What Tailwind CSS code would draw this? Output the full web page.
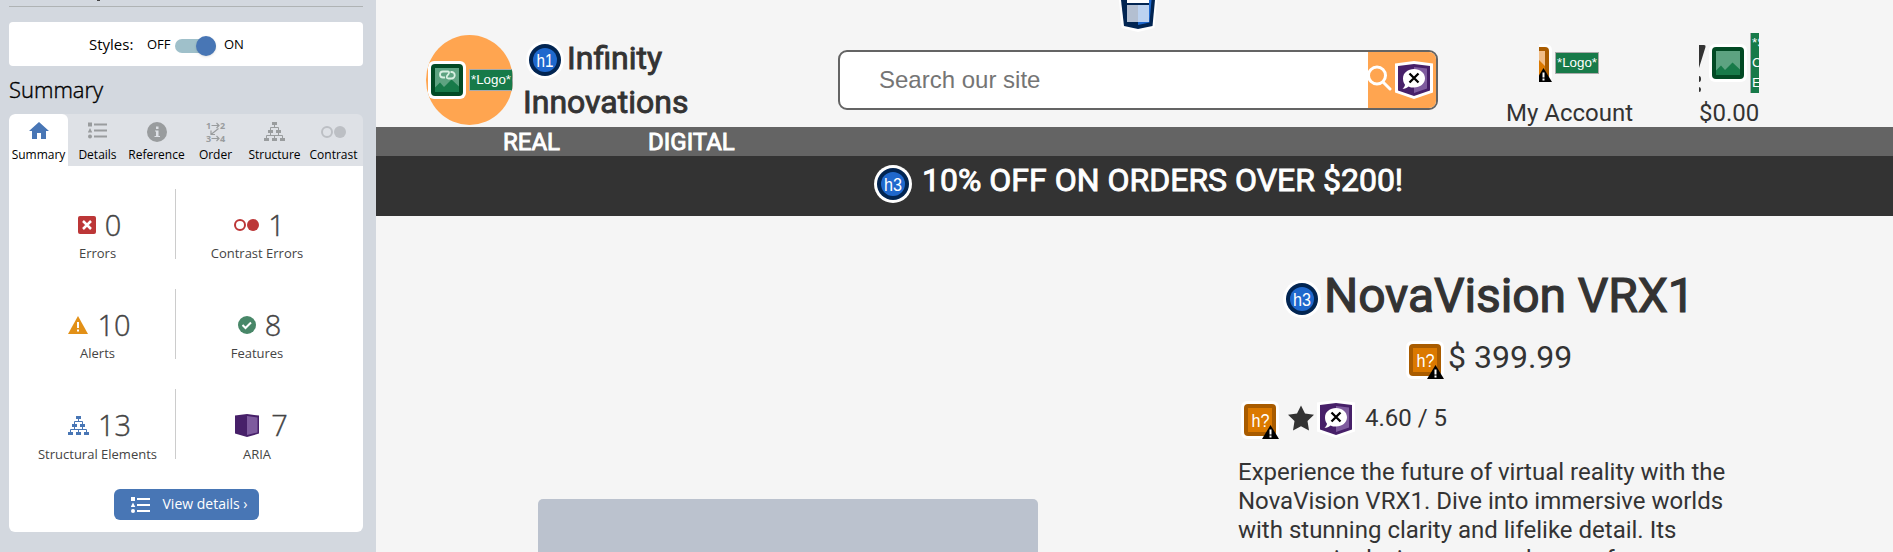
<!DOCTYPE html>
<html lang="en"><head><meta charset="utf-8"><title>Infinity Innovations</title>
<script src="https://cdn.jsdelivr.net/npm/@tailwindcss/browser@4"></script></head>
<body class="h-[552px] overflow-hidden bg-[#f5f5f5]">
<svg class="hidden">
<symbol id="list" viewBox="0 0 19 16"><path d="M0 0h4v4H0zM6 1h13v2H6zM6 7h13v2H6zM6 13h13v2H6zM2 5.500l2.300 4.500h-4.600z"/><circle cx="2" cy="14" r="2"/></symbol>
<symbol id="tree" viewBox="0 0 21 19"><path d="M8 0h5v3H8zM4 8h5v3H4zM12 8h5v3H12zM0 16h5v3H0zM8 16h5v3H8zM16 16h5v3h-5z"/><path d="M10.500 3v3M6.500 8V5.500h8V8M6.500 11v2.500M14.500 11v2.500M2.500 16v-2.500h16V16M10.500 13.500V16" fill="none" stroke="currentColor"/></symbol>
<symbol id="warn" viewBox="0 0 17 14"><path d="M8.500 0 17 14H0z" fill="#000"/><path d="M7.500 4.500h2v5h-2zM7.500 10.500h2v2h-2z" fill="#fff"/></symbol>
<symbol id="hx" viewBox="0 0 38 38"><rect width="38" height="38" rx="6" fill="#fff"/><rect x="3" y="3" width="32" height="32" rx="4" fill="#a95c00"/><rect x="7" y="7" width="24" height="24" fill="#db7900"/><text x="19.500" y="25.500" text-anchor="middle" font-family="Liberation Sans" font-size="18" textLength="18" lengthAdjust="spacingAndGlyphs" fill="#fff">h?</text><use href="#warn" x="21" y="24" width="17" height="14"/></symbol>
<symbol id="aria" viewBox="0 0 38 38"><path d="M0 2.500 19 0l19 2.500v29L19 38 0 31.500z" fill="#fff"/><path d="M3 5 19 3l16 2v24.500L19 35 3 29.500z" fill="#472069"/><path d="M19 6l13 1.500v20L19 32z" fill="#7e5b9e"/><path d="M19 8c6 0 11 4 11 9.300s-5 9.300-11 9.300c-2 0-4-.4-5.500-1.200-1.500 1.500-4 2.300-6 2.300 1.200-1 2.300-2.300 2.500-4C8.500 22 8 19.500 8 17.300 8 12 13 8 19 8z" fill="#fff"/><path d="M14.500 12.500l9 9m0-9l-9 9" stroke="#000" stroke-width="2.300"/></symbol>
<symbol id="pic" viewBox="0 0 38 38"><rect width="38" height="38" rx="6" fill="#fff"/><rect x="3" y="3" width="32" height="32" rx="4" fill="#024a24"/><path d="M7 7h24v24H7z" fill="#5da381"/><path d="M7 26.500l5-5 4 4.500 7.500-7.500 7.500 7V31H7z" fill="#177a49"/></symbol>
</svg>
<div class="flex h-full">
<!-- Evaluation sidebar -->
<aside class="h-full w-[376px] shrink-0 bg-[#d3d8df] pl-[9px] font-['Open_Sans',sans-serif] text-black">
 <div class="relative h-[7px] w-[354px] border-b border-[#afb3b4]"><span class="absolute left-[88px] top-0 h-px w-[3px] bg-[#444]"></span></div>
 <div class="mt-[15px] flex h-[44px] w-[354px] items-center rounded bg-white pl-[80px]">
  <span class="w-[58px] text-[15px]">Styles:</span><span class="mt-px w-[28px] text-[13px]">OFF</span>
  <div class="relative mt-[3px] h-[14px] w-[41px] rounded-full bg-[#9fc0ca]"><i class="absolute right-0 top-[-3px] size-5 rounded-full bg-[#4876b5] shadow"></i></div>
  <span class="ml-[8px] mt-px text-[13px]">ON</span>
 </div>
 <h2 class="mt-[7px] h-[41px] text-[22px] leading-[33px] font-light [-webkit-text-stroke:0.400px]">Summary</h2>
 <nav class="flex h-[52px] w-[354px] overflow-hidden rounded-t-md bg-[#dee1e6] text-[12px] text-[#999c9e]">
  <div class="relative flex w-[59px] shrink-0 flex-col items-center rounded-t-md bg-white pt-[8px] text-[#4876b5]"><svg class="h-[17px] w-[20px] fill-current" viewBox="0 0 20 17"><path d="M10 0l10 9h-3v8h-5v-6H8v6H3V9H0z"/></svg><span class="mt-[7px] text-black">Summary</span></div>
  <div class="flex w-[59px] flex-col items-center pt-[8px]"><svg class="h-[17px] w-[19px] fill-current"><use href="#list"/></svg><span class="mt-[7px] text-black">Details</span></div>
  <div class="flex w-[59px] flex-col items-center pt-[8px]"><svg class="size-5 fill-current" viewBox="0 0 20 20"><circle cx="10" cy="10" r="10"/><path d="M9 4.500h2.500V7H9zM8 8.500h3.500V14H13v1H7.500v-1H9V9.500H8z" fill="#dee1e6"/></svg><span class="mt-[4px] text-black">Reference</span></div>
  <div class="flex w-[59px] flex-col items-center pt-[8px]"><svg class="h-[20px] w-[20px] overflow-visible" viewBox="0 0 20 20"><g fill="currentColor" font-family="Open Sans" font-size="9" font-weight="700"><text x="0" y="6.500">1</text><text x="14" y="6.500">2</text><text x="0" y="19.500">3</text><text x="14" y="19.500">4</text></g><path d="M5.500 3.500h8M10.500 1l2.500 2.500L10.500 6M5.500 16.500h8M10.500 14l2.500 2.500-2.500 2.500M12.500 6.500l-7.500 6M5 8.500v4h4" fill="none" stroke="currentColor" stroke-width="1.200"/></svg><span class="mt-[4px] text-black">Order</span></div>
  <div class="flex w-[59px] flex-col items-center pt-[8px]"><svg class="h-[19px] w-[21px] fill-current"><use href="#tree"/></svg><span class="mt-[5px] text-black">Structure</span></div>
  <div class="flex w-[59px] flex-col items-center pt-[8px] text-[#bcbfc4]"><svg class="h-[20px] w-[25px]" viewBox="0 0 25 20"><circle cx="6" cy="10" r="5" fill="none" stroke="currentColor" stroke-width="2"/><circle cx="19" cy="10" r="6" fill="currentColor"/></svg><span class="mt-[4px] text-black">Contrast</span></div>
 </nav>
 <div class="flex h-[366px] w-[354px] flex-col items-center rounded-b-md bg-white pt-[23px] text-[#444]">
  <div class="grid w-full grid-cols-[167px_155px] gap-y-[30px]">
   <div class="flex h-[70px] flex-col items-center border-r border-[#ccc] pl-[11px] pt-[18px]"><div class="flex h-[36px] items-center gap-[9px] pl-[4px] text-[29px] font-light [-webkit-text-stroke:0.400px]"><svg class="size-[18px]" viewBox="0 0 18 18"><rect width="18" height="18" rx="2" fill="#bc3637"/><path d="M5 5l8 8m0-8l-8 8" stroke="#fff" stroke-width="2.500"/></svg><span>0</span></div><span class="mt-px text-[13px] leading-[18px]">Errors</span></div>
   <div class="flex h-[70px] flex-col items-center pl-[7px] pt-[18px]"><div class="flex h-[36px] items-center gap-[9px] pl-[5px] text-[29px] font-light [-webkit-text-stroke:0.400px]"><svg class="h-[12px] w-[25px]" viewBox="0 0 25 12"><circle cx="6" cy="6" r="5" fill="none" stroke="#bc3637" stroke-width="2"/><circle cx="19" cy="6" r="6" fill="#bc3637"/></svg><span>1</span></div><span class="mt-px text-[13px] leading-[18px]">Contrast Errors</span></div>
   <div class="flex h-[70px] flex-col items-center border-r border-[#ccc] pl-[11px] pt-[18px]"><div class="flex h-[36px] items-center gap-[9px] pl-[4px] text-[29px] font-light [-webkit-text-stroke:0.400px]"><svg class="h-[18px] w-[20px]" viewBox="0 0 20 18"><path d="M10 0l10 18H0z" fill="#e29017"/><path d="M9 6h2v6H9zM9 13.500h2v2H9z" fill="#fff"/></svg><span>10</span></div><span class="mt-px text-[13px] leading-[18px]">Alerts</span></div>
   <div class="flex h-[70px] flex-col items-center pl-[7px] pt-[18px]"><div class="flex h-[36px] items-center gap-[9px] pl-[5px] text-[29px] font-light [-webkit-text-stroke:0.400px]"><svg class="size-[18px]" viewBox="0 0 18 18"><circle cx="9" cy="9" r="9" fill="#488768"/><path d="M4.500 9l3 3L13 6.500" fill="none" stroke="#fff" stroke-width="2"/></svg><span>8</span></div><span class="mt-px text-[13px] leading-[18px]">Features</span></div>
   <div class="flex h-[70px] flex-col items-center border-r border-[#ccc] pl-[11px] pt-[18px]"><div class="flex h-[36px] items-center gap-[9px] pl-[4px] text-[29px] font-light [-webkit-text-stroke:0.400px]"><svg class="h-[19px] w-[21px] fill-current text-[#4876b5]"><use href="#tree"/></svg><span>13</span></div><span class="mt-[2px] text-[13px] leading-[18px]">Structural Elements</span></div>
   <div class="flex h-[70px] flex-col items-center pl-[7px] pt-[18px]"><div class="flex h-[36px] items-center gap-[12px] pl-[9px] text-[29px] font-light [-webkit-text-stroke:0.400px]"><svg class="h-[23px] w-[24px]" viewBox="0 0 24 23"><path d="M0 1.500L12 0l12 1.500v18L12 23 0 19.500z" fill="#472069"/><path d="M12 2l10.500 1.500v15L12 21z" fill="#7e5b9e"/></svg><span>7</span></div><span class="mt-[2px] text-[13px] leading-[18px]">ARIA</span></div>
  </div>
  <button class="mt-[30px] flex h-[31px] w-[145px] items-center rounded-md bg-[#4876b5] pl-[17px] text-[14px] text-white"><svg class="h-[16px] w-[19px] fill-current"><use href="#list"/></svg><span class="-mt-[2px] ml-[13px]">View details ›</span></button>
 </div>
</aside>
<!-- Shop page -->
<main class="relative h-full grow overflow-hidden font-[Roboto,sans-serif] text-[#333]">
 <header class="relative flex h-[127px] items-start">
  <svg class="absolute left-[743px] top-0 h-[32px] w-[38px]" viewBox="0 0 38 32"><path d="M0 0h38l-2.500 28L19 32 2.500 28z" fill="#fff"/><path d="M2 0h34l-2.500 26L19 29 5 26z" fill="#022552"/><path d="M19 0h13.500l-2 22.500L19 25z" fill="#1f68cd"/><path d="M8 0h22v3H8z" fill="#fff"/><path d="M8 3h22v2H8z" fill="#022552"/><path d="M8 5h11v17H8z" fill="#b3bfd1"/><path d="M19 5h11v17H19z" fill="#bcd2f0"/></svg>
  <div class="ml-[50px] mt-[35px] flex h-[90px] w-[87px] items-center overflow-hidden rounded-[50%] bg-[#ffa550]"><svg class="ml-[2px] size-[38px] shrink-0"><use href="#pic"/><path d="M17 16.500h-2a3 3 0 0 1 0-6h4.500q2.500 0 1 2.500l-1.500 2q-1 2.500 1.500 2.500h3a3 3 0 0 0 0-6.500h-1" fill="none" stroke="#d8f0e2" stroke-width="1.800"/></svg><span class="ml-[3px] h-[22px] border border-[#aaa] bg-[#177a49] px-px font-['Liberation_Sans',sans-serif] text-[13.33px] leading-[20px] text-white">*Logo*</span></div>
  <h1 class="ml-[12px] mt-[36px] w-[200px] text-[32px] leading-[44px] [-webkit-text-stroke:0.900px]"><span class="flex items-center"><svg class="ml-px mr-[5px] mt-[4px] size-[38px]" viewBox="0 0 38 38"><circle cx="19" cy="19" r="19" fill="#fff"/><circle cx="19" cy="19" r="16" fill="#022552"/><circle cx="19" cy="19" r="12" fill="#1f68cd"/><text x="19" y="26" text-anchor="middle" font-family="Liberation Sans" font-size="18" textLength="17" lengthAdjust="spacingAndGlyphs" fill="#fff" stroke="none">h1</text></svg><span class="-ml-[2px]">Infinity</span></span><span class="-ml-[2px]">Innovations</span></h1>
  <div class="ml-[113px] mt-[50px] flex h-[60px] w-[600px] overflow-hidden rounded-[9px] border-2 border-[#646464] bg-white"><div class="w-[528px] pl-[39px] font-['Liberation_Sans',sans-serif] text-[24px] leading-[56px] text-[#757575]">Search our site</div><div class="flex grow items-start bg-[#ffa550]"><svg class="mt-[13px] h-[26px] w-[24px] fill-none stroke-white stroke-[3]" viewBox="0 0 24 26"><circle cx="9" cy="10.500" r="8.500"/><path d="M15 17l7 7" stroke-linecap="round"/></svg><svg class="ml-[3px] mt-[9px] size-[38px]"><use href="#aria"/></svg></div></div>
  <div class="ml-[69px] mt-[33px] h-[94px] w-[130px]"><div class="ml-[32px] mt-[11px] flex h-[64px] w-[61px] items-start"><div class="relative h-[38px] w-[13px] overflow-hidden"><svg class="h-[38px] w-[13px]" viewBox="25 0 13 38"><rect width="38" height="38" rx="6" fill="#fff"/><rect x="3" y="3" width="32" height="32" rx="4" fill="#a95c00"/><path d="M7 7h24v24H7z" fill="#db7900"/><path d="M7 7h24v15l-6-6H7z" fill="#f0bd87"/><use href="#warn" x="21" y="24" width="17" height="14"/></svg></div><span class="ml-[3px] mt-[8px] h-[22px] border border-[#aaa] bg-[#177a49] px-px font-['Liberation_Sans',sans-serif] text-[13.33px] leading-[20px] text-white">*Logo*</span></div><p class="-mt-[11px] -ml-px whitespace-nowrap text-[24px] leading-[32px]">My Account</p></div>
  <div class="ml-[62px] mt-[33px] w-[62px]"><div class="flex h-[60px] w-[60px] overflow-hidden"><svg class="mt-[12px] h-[47px] w-[7px] shrink-0 fill-[#333]" viewBox="0 0 7 47"><path d="M0 0h5q2 0 1.500 2L0 23zM0 31q2 0 2 3t-2 3zM0 42q2 0 2 2.500T0 47z"/></svg><svg class="ml-[3px] mt-[11px] size-[38px] shrink-0"><use href="#pic"/></svg><span class="ml-[3px] w-[44px] shrink-0 border-l border-[#aaa] bg-[#177a49] pl-px font-['Liberation_Sans',sans-serif] text-[13.33px] leading-[20px] text-white">*Shopping<br>Cart<br>Empty</span></div><p class="mt-[4px] text-[24px] leading-[32px]">$0.00</p></div>
 </header>
 <nav class="flex h-[29px] items-center gap-[87px] bg-[#646464] pl-[127px] text-[24px] text-white [-webkit-text-stroke:0.900px]"><span class="w-[58px]">REAL</span><span>DIGITAL</span></nav>
 <h3 class="flex h-[60px] items-start bg-[#333] pl-[498px] text-[32px] leading-[49px] text-white [-webkit-text-stroke:0.900px]"><svg class="mr-[10px] mt-[9px] size-[38px]" viewBox="0 0 38 38"><circle cx="19" cy="19" r="19" fill="#fff"/><circle cx="19" cy="19" r="16" fill="#022552"/><circle cx="19" cy="19" r="12" fill="#1f68cd"/><text x="19" y="26" text-anchor="middle" font-family="Liberation Sans" font-size="18" textLength="18" lengthAdjust="spacingAndGlyphs" fill="#fff" stroke="none">h3</text></svg>10% OFF ON ORDERS OVER $200!</h3>
 <div class="flex">
  <div class="ml-[162px] mt-[283px] h-[100px] w-[500px] shrink-0 rounded-[5px] bg-[#bbc2ce]"></div>
  <section class="ml-[200px] mt-[50px] w-[500px]">
   <h3 class="flex h-[60px] items-start pl-[45px] text-[48px] leading-[59px] tracking-[-0.080px] [-webkit-text-stroke:1.200px]"><svg class="mr-[3px] mt-[14px] size-[38px]" viewBox="0 0 38 38"><circle cx="19" cy="19" r="19" fill="#fff"/><circle cx="19" cy="19" r="16" fill="#022552"/><circle cx="19" cy="19" r="12" fill="#1f68cd"/><text x="19" y="26" text-anchor="middle" font-family="Liberation Sans" font-size="18" textLength="18" lengthAdjust="spacingAndGlyphs" letter-spacing="0" fill="#fff" stroke="none">h3</text></svg>NovaVision VRX1</h3>
   <p class="mt-[11px] flex h-[50px] items-start pl-[168px] text-[32px] leading-[40px]"><svg class="mr-[4px] mt-[4px] size-[38px]"><use href="#hx"/></svg>$ 399.99</p>
   <div class="mt-[14px] flex h-[48px] items-start pl-[3px] text-[24px] leading-[34px]"><svg class="size-[38px]"><use href="#hx"/></svg><svg class="ml-[9px] mt-[4px] size-[26px] fill-[#333]" viewBox="0 0 26 25"><path d="M13 0l4 8 9 1.300-6.500 6.200L21 25l-8-4.300L5 25l1.500-9.500L0 9.300 9 8z"/></svg><svg class="-mt-px ml-[3px] size-[38px]"><use href="#aria"/></svg><span class="ml-[10px]">4.60 / 5</span></div>
   <p class="mt-[9px] w-[490px] text-[24px] leading-[29px]">Experience the future of virtual reality with the<br>NovaVision VRX1. Dive into immersive worlds<br>with stunning clarity and lifelike detail. Its<br>ergonomic design ensures hours of</p>
  </section>
 </div>
</main>
</div></body></html>
